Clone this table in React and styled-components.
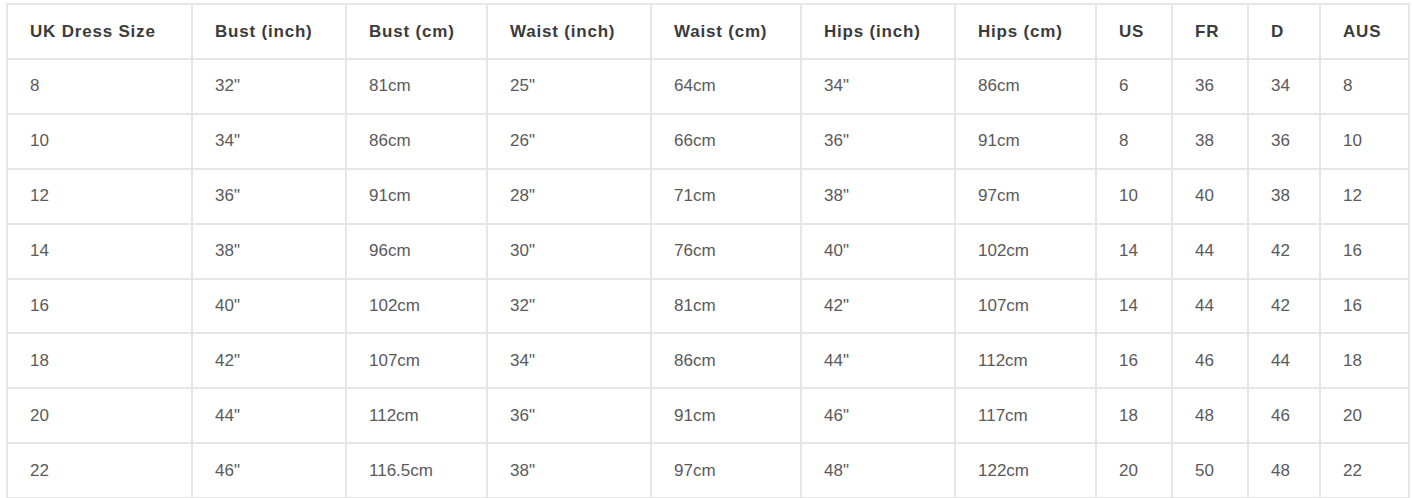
import React from "react";
import styled, { createGlobalStyle } from "styled-components";

const GlobalStyle = createGlobalStyle`
  html, body {
    margin: 0;
    padding: 0;
    background: #fff;
  }
  body {
    font-family: "Liberation Sans", Arial, sans-serif;
  }
`;

const columns = [
  { label: "UK Dress Size", width: 185 },
  { label: "Bust (inch)", width: 154 },
  { label: "Bust (cm)", width: 141 },
  { label: "Waist (inch)", width: 164 },
  { label: "Waist (cm)", width: 150 },
  { label: "Hips (inch)", width: 154 },
  { label: "Hips (cm)", width: 141 },
  { label: "US", width: 76 },
  { label: "FR", width: 76 },
  { label: "D", width: 72 },
  { label: "AUS", width: 89 },
];

// uk, bust in, bust cm, waist in, waist cm, hips in, hips cm, us, fr, d, aus
const rows = [
  ["8", '32"', "81cm", '25"', "64cm", '34"', "86cm", "6", "36", "34", "8"],
  ["10", '34"', "86cm", '26"', "66cm", '36"', "91cm", "8", "38", "36", "10"],
  ["12", '36"', "91cm", '28"', "71cm", '38"', "97cm", "10", "40", "38", "12"],
  ["14", '38"', "96cm", '30"', "76cm", '40"', "102cm", "14", "44", "42", "16"],
  ["16", '40"', "102cm", '32"', "81cm", '42"', "107cm", "14", "44", "42", "16"],
  ["18", '42"', "107cm", '34"', "86cm", '44"', "112cm", "16", "46", "44", "18"],
  ["20", '44"', "112cm", '36"', "91cm", '46"', "117cm", "18", "48", "46", "20"],
  ["22", '46"', "116.5cm", '38"', "97cm", '48"', "122cm", "20", "50", "48", "22"],
];

const Page = styled.div`
  padding: 3px 0 0 6px;
`;

const Table = styled.table`
  border-collapse: collapse;
  table-layout: fixed;
  width: 1403px;
  border: 2px solid #e6e6e6;
`;

const HeadCell = styled.th`
  height: 53px;
  padding: 0 0 0 22px;
  border: 2px solid #e6e6e6;
  text-align: left;
  vertical-align: middle;
  font-size: 17px;
  font-weight: 700;
  letter-spacing: 0.8px;
  color: #3b3b3b;
  white-space: nowrap;
`;

const Cell = styled.td`
  height: 52.9px;
  padding: 0 0 0 22px;
  border: 2px solid #e6e6e6;
  text-align: left;
  vertical-align: middle;
  font-size: 17px;
  color: #5a5a5a;
  white-space: nowrap;
`;

export default function App() {
  return (
    <Page>
      <GlobalStyle />
      <Table>
        <colgroup>
          {columns.map((c) => (
            <col key={c.label} style={{ width: c.width }} />
          ))}
        </colgroup>
        <thead>
          <tr>
            {columns.map((c) => (
              <HeadCell key={c.label}>{c.label}</HeadCell>
            ))}
          </tr>
        </thead>
        <tbody>
          {rows.map((r, i) => (
            <tr key={i}>
              {r.map((v, j) => (
                <Cell key={j}>{v}</Cell>
              ))}
            </tr>
          ))}
        </tbody>
      </Table>
    </Page>
  );
}
